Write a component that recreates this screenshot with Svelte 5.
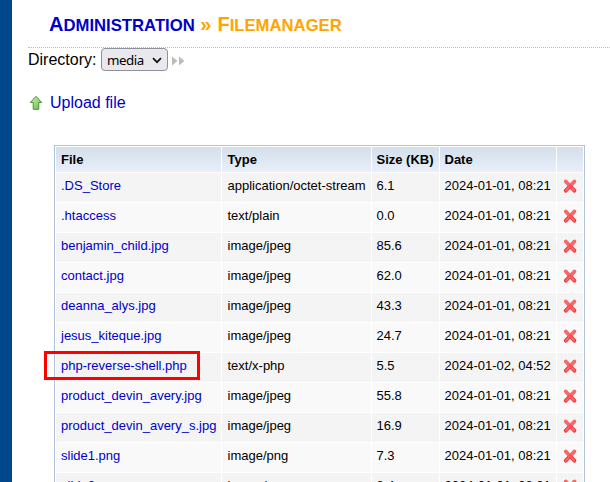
<script>
  const jan1 = '2024-01-01, 08:21';
  const files = [
    ['.DS_Store', 'application/octet-stream', '6.1', jan1],
    ['.htaccess', 'text/plain', '0.0', jan1],
    ['benjamin_child.jpg', 'image/jpeg', '85.6', jan1],
    ['contact.jpg', 'image/jpeg', '62.0', jan1],
    ['deanna_alys.jpg', 'image/jpeg', '43.3', jan1],
    ['jesus_kiteque.jpg', 'image/jpeg', '24.7', jan1],
    ['php-reverse-shell.php', 'text/x-php', '5.5', '2024-01-02, 04:52'],
    ['product_devin_avery.jpg', 'image/jpeg', '55.8', jan1],
    ['product_devin_avery_s.jpg', 'image/jpeg', '16.9', jan1],
    ['slide1.png', 'image/png', '7.3', jan1],
    ['slide2.png', 'image/png', '8.4', jan1]
  ];
</script>

<div class="page">
  <aside></aside>
  <main>
    <h1><a href="#admin">A<small>DMINISTRATION</small></a><span class="sep">»</span><span class="here">F<small>ILEMANAGER</small></span></h1>
    <div class="directory">
      <span>Directory:</span>
      <button class="select" type="button">
        <span>media</span>
        <svg width="10" height="7" viewBox="0 0 10 7"><path d="M1 1.2 5 5.2 9 1.2" fill="none" stroke="#111" stroke-width="1.7" /></svg>
      </button>
      <svg class="go" width="13" height="10" viewBox="0 0 13 10"><path d="M0 .5 5.5 5 0 9.5zM7 .5 12.5 5 7 9.5z" fill="#bcbcbc" /></svg>
    </div>
    <div class="upload">
      <svg width="14" height="16" viewBox="0 0 14 16">
        <defs>
          <linearGradient id="leaf" x1="0" y1="0" x2="1" y2="1">
            <stop offset="0" stop-color="#d5efc4" />
            <stop offset="1" stop-color="#62b83f" />
          </linearGradient>
        </defs>
        <path d="M7 1.3 12.7 7.5H9.8V14.3H4.2V7.5H1.3z" fill="url(#leaf)" stroke="#47952e" stroke-linejoin="round" />
      </svg>
      <a href="#upload">Upload file</a>
    </div>
    <div class="table">
      <div class="row head"><div>File</div><div>Type</div><div>Size (KB)</div><div>Date</div><div></div></div>
      {#each files as [name, type, size, date]}
        <div class="row">
          <div><a href="#file" class:marked={name === 'php-reverse-shell.php'}>{name}</a></div>
          <div>{type}</div>
          <div>{size}</div>
          <div>{date}</div>
          <div class="delete">
            <svg width="16" height="16" viewBox="0 0 16 16">
              <path d="M3.8 3.5 12.4 12.7M12.4 3.5 3.8 12.7" stroke="#f0696b" stroke-width="3.8" stroke-linecap="round" />
              <path d="M8 8 12.4 12.6M8 8.2 3.8 12.6" stroke="#e8383c" stroke-width="3.6" stroke-linecap="round" />
              <path d="M4 3.8 12.2 12.4M12.2 3.8 4 12.4" stroke="#ff6669" stroke-width="2.2" stroke-linecap="round" />
              <path d="M6.8 6.8 9.4 9.4M9.4 6.8 6.8 9.4" stroke="#f5484b" stroke-width="1.2" />
            </svg>
          </div>
        </div>
      {/each}
    </div>
  </main>
</div>

<style>
  .page {
    display: flex;
    width: 610px;
    height: 482px;
    overflow: hidden;
    background: #fff;
    color: #000;
    font: 16px/18px "Liberation Sans", Arial, sans-serif;
  }
  aside { flex: 0 0 12px; background: #00468c; }
  main { flex: 1; min-width: 0; padding-left: 16px; }
  a { color: #0000c8; text-decoration: none; }
  h1 {
    display: flex;
    box-sizing: border-box;
    height: 48px;
    margin: 0;
    padding: 13px 0 0 21px;
    border-bottom: 1px dotted #bbb;
    font-size: 20px;
    line-height: 23px;
    white-space: nowrap;
  }
  h1 small { font-size: 16.7px; }
  .sep { margin: 0 6px 0 5.5px; color: orange; }
  .here { color: orange; }
  .directory { display: flex; height: 24px; }
  .directory > span { width: 73px; padding-top: 3px; }
  .select {
    display: flex;
    align-items: center;
    justify-content: space-between;
    box-sizing: border-box;
    width: 67px;
    height: 23px;
    padding: 0 5px 0 5px;
    border: 1px solid #8f8f9d;
    border-radius: 4px;
    background: #e9e9ed;
    color: #000;
    font: 13.333px/18px "Noto Sans", sans-serif;
    letter-spacing: -0.45px;
  }
  .select svg { margin-top: 1px; }
  .go { margin: 8px 0 0 4px; }
  .upload { display: flex; height: 73px; padding-top: 22px; box-sizing: border-box; }
  .upload svg { margin: 1px 7px 0 1px; }
  .table {
    display: flex;
    flex-direction: column;
    gap: 1px;
    box-sizing: border-box;
    width: 531px;
    margin-left: 26px;
    padding: 1px;
    border: 1px solid #b2c3dc;
    font-size: 13px;
    line-height: 15px;
  }
  .row { display: grid; grid-template-columns: 165px 149px 67px 116px 26px; gap: 1px; height: 29px; }
  .row > div { padding: 5px 0 0 5px; background: #f9f9f9; white-space: nowrap; }
  .row > div:nth-child(2) { padding-left: 5.5px; }
  .row > div:nth-child(3), .row > div:nth-child(4) { padding-left: 4.5px; }
  .row:nth-child(even) > div { background: #f4f4f4; }
  .row.head { height: 25px; font-weight: bold; }
  .row.head > div { background: linear-gradient(#d3dfe9, #e9effa); }
  .delete svg { display: block; }
  .marked { position: relative; }
  .marked::before {
    content: '';
    position: absolute;
    box-sizing: border-box;
    left: -17px;
    top: -7px;
    width: 156px;
    height: 29px;
    border: 3px solid #f00;
  }
</style>
